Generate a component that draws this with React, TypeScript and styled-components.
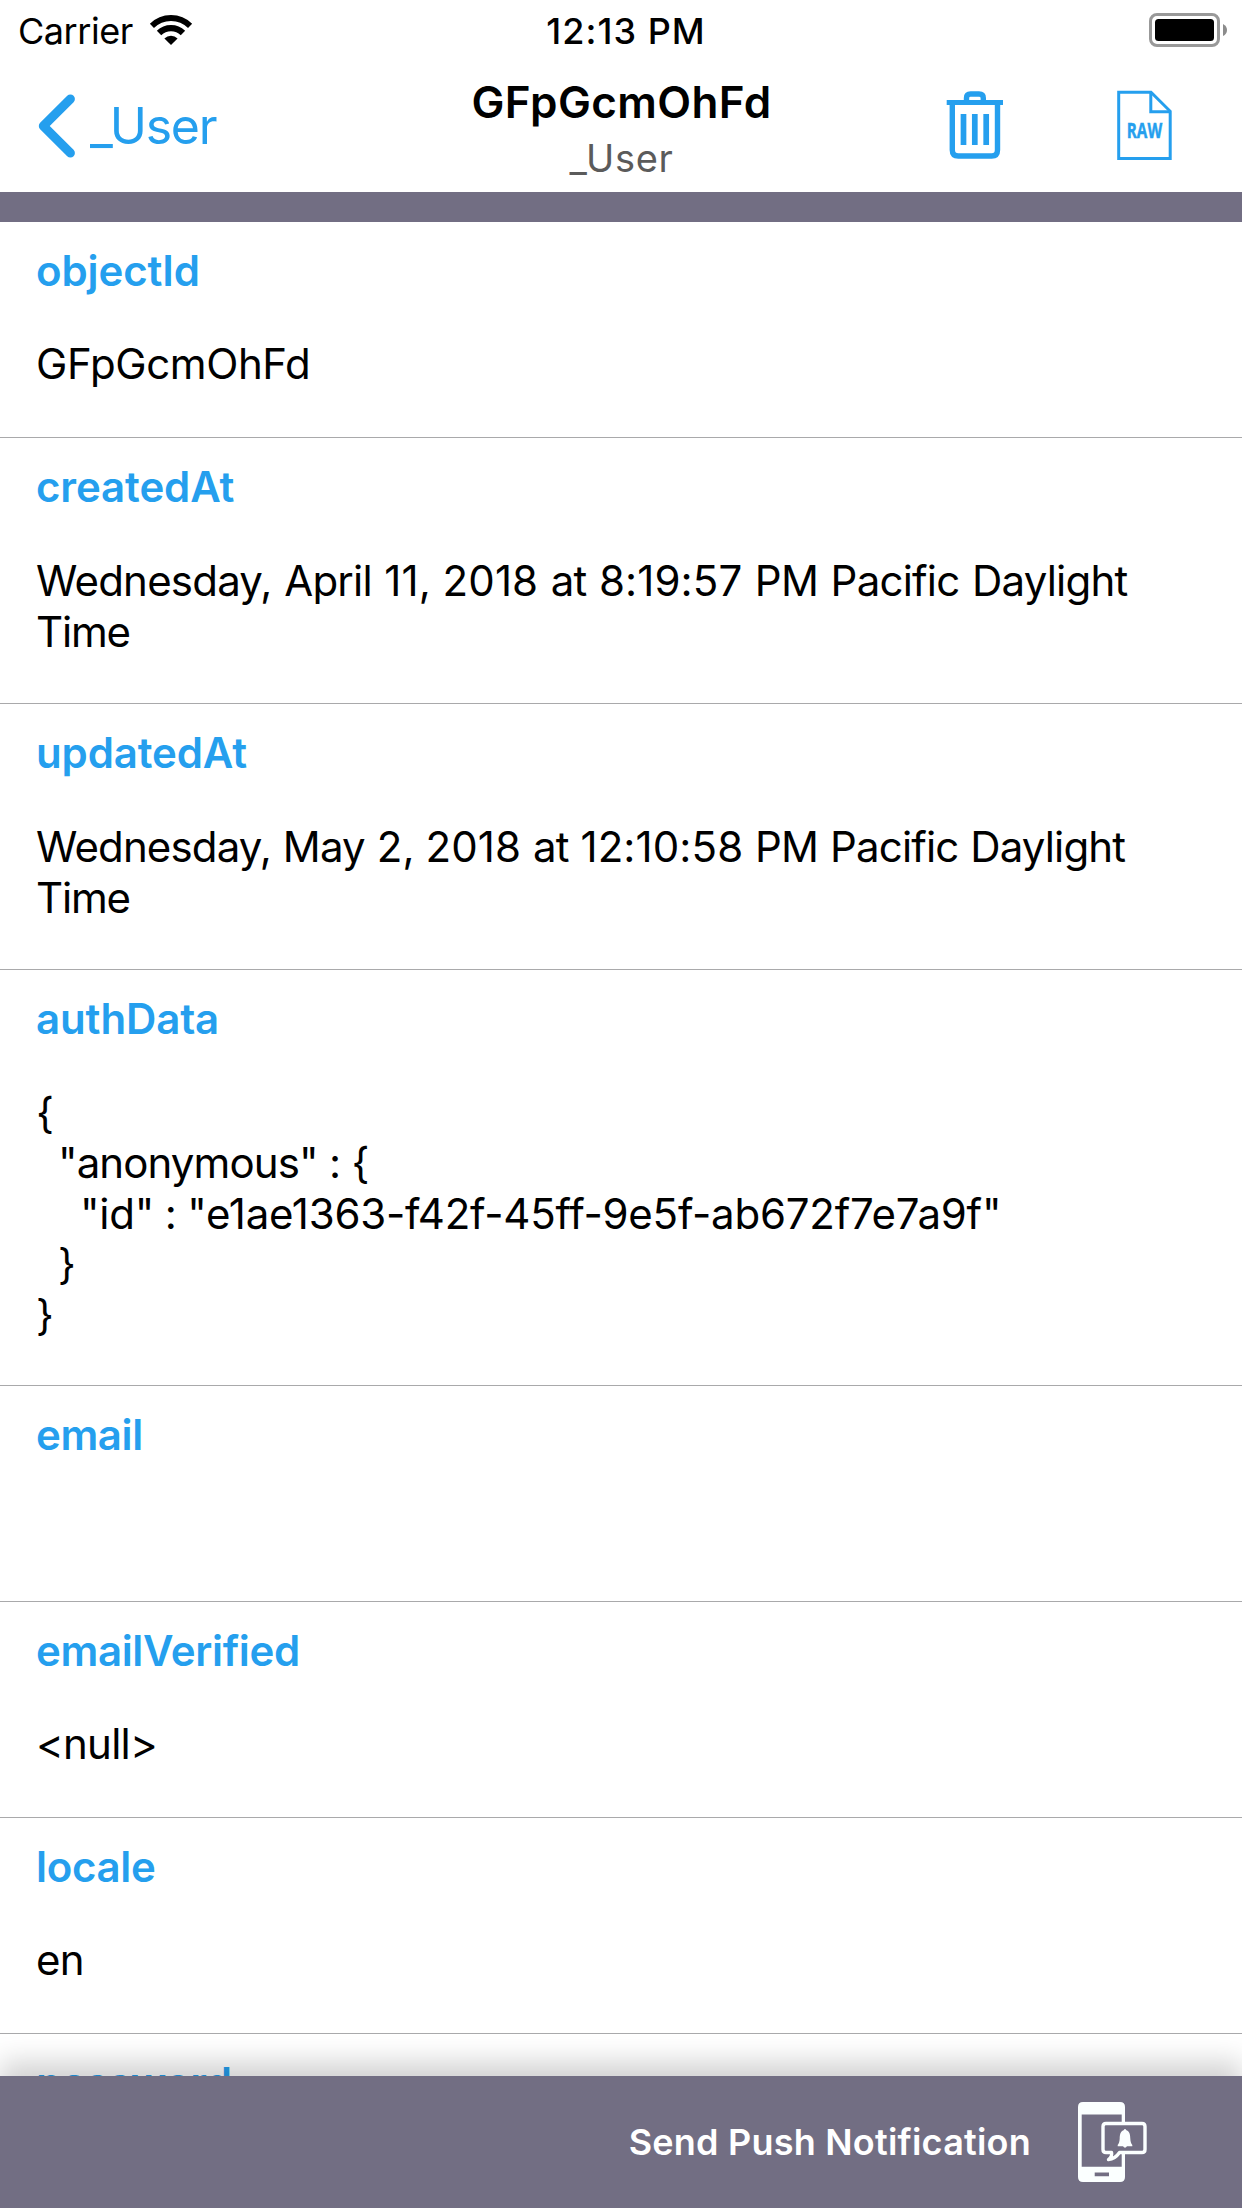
import React from 'react';
import styled, { createGlobalStyle } from 'styled-components';

const BLUE = '#259fee';
const SLATE = '#726e83';

const GlobalStyle = createGlobalStyle`
  *, *::before, *::after { box-sizing: border-box; }
  html, body { margin: 0; padding: 0; background: #fff; }
  body { font-family: Inter, Roboto, sans-serif; color: #000; }
`;

const Screen = styled.div`
  display: flex;
  flex-direction: column;
  width: 1242px;
  height: 2208px;
  overflow: hidden;
  background: #fff;
`;

const StatusBar = styled.div`
  display: grid;
  grid-template-columns: 1fr auto 1fr;
  align-items: center;
  flex: none;
  height: 60px;
  padding: 0 15px 0 18px;
  font-size: 36px;
  line-height: 56px;
`;

const Carrier = styled.div`
  display: flex;
  align-items: center;
  gap: 16px;
  letter-spacing: -0.45px;

  svg {
    margin-bottom: 2px;
  }
`;

const StatusText = styled.span`
  padding-top: 2px;
`;

const Clock = styled.div`
  padding: 2px 0 0 7px;
  font-weight: 500;
  letter-spacing: 1.05px;
`;

const BatterySlot = styled.div`
  display: flex;
  justify-content: flex-end;
`;

const NavBar = styled.header`
  display: grid;
  grid-template-columns: 1fr auto 1fr;
  flex: none;
  height: 132px;
`;

const BackButton = styled.button`
  display: flex;
  align-items: center;
  gap: 14px;
  height: 132px;
  padding: 0 0 0 36px;
  border: 0;
  background: none;
  color: ${BLUE};
  font: 400 50px/60px Inter, Roboto, sans-serif;
  letter-spacing: -1.2px;
`;

const TitleGroup = styled.div`
  display: flex;
  flex-direction: column;
  align-items: center;
  padding: 15px 0 0 1px;
`;

const Title = styled.h1`
  margin: 0;
  font-size: 44px;
  line-height: 54px;
  font-weight: 600;
  letter-spacing: 0.4px;
`;

const Subtitle = styled.div`
  margin-top: 6px;
  color: #5b5b5b;
  font-size: 38px;
  line-height: 46px;
  letter-spacing: 0.7px;
`;

const Actions = styled.div`
  display: flex;
  justify-content: flex-end;
  align-items: flex-start;
  gap: 112px;
  padding: 30px 70px 0 0;
`;

const IconButton = styled.button`
  display: flex;
  padding: 0;
  border: 0;
  background: none;
  color: ${BLUE};
`;

const Divider = styled.div`
  flex: none;
  height: 30px;
  background: ${SLATE};
`;

const FieldList = styled.main`
  flex: 1;
  min-height: 0;
  overflow: hidden;
`;

const Field = styled.section`
  padding: 24px 36px 48px;
  border-bottom: 1px solid #a9a9ab;
`;

const FieldName = styled.h2<{ $tracking?: number }>`
  margin: 0 0 43px;
  color: ${BLUE};
  font-size: 42px;
  line-height: 50px;
  font-weight: 600;
  letter-spacing: ${p => p.$tracking ?? -0.12}px;
`;

const valueSpacing = {
  text: 'line-height: 50px;',
  date: 'line-height: 51px; margin-bottom: -2px;',
  json: 'line-height: 50.4px; margin-top: 44px; margin-bottom: -3px;',
};

const FieldValue = styled.div<{ $kind: keyof typeof valueSpacing }>`
  min-height: 50px;
  font-size: 42px;
  ${p => valueSpacing[p.$kind]}
`;

const ValueLine = styled.div<{ $tracking?: number; $wordGap?: number; $indent?: number }>`
  white-space: pre-wrap;
  padding-left: ${p => p.$indent ?? 0}px;
  letter-spacing: ${p => p.$tracking ?? -0.75}px;
  word-spacing: ${p => p.$wordGap ?? 0}px;
`;

const Digits = styled.span`
  letter-spacing: 0.1px;
`;

const Footer = styled.footer`
  position: relative;
  display: flex;
  justify-content: flex-end;
  align-items: center;
  flex: none;
  gap: 47px;
  height: 132px;
  padding-right: 94px;
  background: ${SLATE};
  box-shadow: 0 -14px 26px rgba(0, 0, 0, 0.18);
  color: #fff;
`;

const PushLabel = styled.span`
  font-size: 36px;
  line-height: 44px;
  font-weight: 600;
  letter-spacing: 0.22px;
`;

const WifiIcon = () => (
  <svg width="44" height="32" viewBox="0 0 44 32" fill="none" stroke="#000">
    <path d="M2.91 12.91A27 27 0 0 1 41.09 12.91" strokeWidth="5.8" />
    <path d="M10.05 20.05A16.9 16.9 0 0 1 33.95 20.05" strokeWidth="6.2" />
    <path d="M22 32L15.4 25.4A9.3 9.3 0 0 1 28.6 25.4Z" fill="#000" stroke="none" />
  </svg>
);

const BatteryIcon = () => (
  <svg width="78" height="34" viewBox="0 0 78 34">
    <rect x="1.5" y="1.5" width="68" height="31" rx="6.5" fill="none" stroke="#999" strokeWidth="3" />
    <rect x="6" y="6" width="59" height="22" rx="3.5" fill="#000" />
    <path d="M74 11Q78 13 78 17T74 23Z" fill="#8c8c8c" />
  </svg>
);

const ChevronIcon = () => (
  <svg width="40" height="64" viewBox="0 0 40 64" fill="none" stroke="currentColor" strokeWidth="9" strokeLinecap="round" strokeLinejoin="round">
    <path d="M34.4 5L7.3 32L34.4 59" />
  </svg>
);

const TrashIcon = () => (
  <svg width="58" height="70" viewBox="0 0 58 70" fill="none" stroke="currentColor">
    <path d="M0.7 12.5H57" strokeWidth="5.2" />
    <path d="M20.5 12V8Q20.5 4 24.5 4H33Q37.3 4 37.3 8V12" strokeWidth="5.4" />
    <path d="M6.3 12V60Q6.3 66 12.3 66H45.7Q51.5 66 51.5 60V12" strokeWidth="5.4" />
    <path d="M17.5 24V55M28.8 24V55M40.2 24V55" strokeWidth="5.7" />
  </svg>
);

const RawIcon = () => (
  <svg width="56" height="72" viewBox="0 0 56 72" fill="none" stroke="currentColor" strokeWidth="3">
    <path d="M2.7 2.2H35L54.2 21.3V68.5H2.7Z" />
    <path d="M34.8 2.5V21.7H54" />
    <text transform="translate(10.8 48.4) scale(0.71 1)" fontFamily="'Open Sans', sans-serif" fontWeight="700" fontSize="21.5" fill="currentColor" stroke="currentColor" strokeWidth="0.5">RAW</text>
  </svg>
);

const PushIcon = () => (
  <svg width="70" height="80" viewBox="0 0 70 80">
    <path fill="#fbffff" fillRule="evenodd" d="M5 0H42Q47 0 47 5V75Q47 80 42 80H5Q0 80 0 75V5Q0 0 5 0ZM3.7 12.6V64.7H43.7V12.6ZM16.7 70.5V74.2H31V70.5Z" />
    <path fill={SLATE} stroke="#fbffff" strokeWidth="3.4" strokeLinejoin="round" d="M28 21.5H64Q67 21.5 67 24.5V47.5Q67 50.5 64 50.5H41.5Q37 57 30.5 57.5Q34.5 54.5 33.5 50.5H28Q25 50.5 25 47.5V24.5Q25 21.5 28 21.5Z" />
    <path fill="#fbffff" d="M45.6 28.2Q47 25.8 48.4 28.2C51.8 29.5 52.2 33 52.3 36.5C52.4 39.5 53 41.5 54.3 42.9V44.3H49Q47 47 45 44.3H39.7V42.9C41 41.5 41.6 39.5 41.7 36.5C41.8 33 42.2 29.5 45.6 28.2Z" />
  </svg>
);

type Line = { text: string; tracking?: number; wordGap?: number; indent?: number };
type FieldData = { name: string; tracking?: number; lines: Line[]; kind?: 'date' | 'json' };

const fields: FieldData[] = [
  { name: 'objectId', lines: [{ text: 'GFpGcmOhFd', tracking: -0.42 }] },
  {
    name: 'createdAt',
    kind: 'date',
    lines: [
      { text: 'Wednesday, April 11, 2018 at 8:19:57 PM Pacific Daylight', tracking: -0.78, wordGap: 1.5 },
      { text: 'Time', tracking: -1.2 },
    ],
  },
  {
    name: 'updatedAt',
    kind: 'date',
    lines: [
      { text: 'Wednesday, May 2, 2018 at 12:10:58 PM Pacific Daylight', tracking: -0.85, wordGap: 0.9 },
      { text: 'Time', tracking: -1.2 },
    ],
  },
  {
    name: 'authData',
    kind: 'json',
    lines: [
      { text: '{' },
      { text: '"anonymous" : {', indent: 22, tracking: -0.9, wordGap: 0.4 },
      { text: '"id" : "e1ae1363-f42f-45ff-9e5f-ab672f7e7a9f"', indent: 44, tracking: -0.22, wordGap: -1 },
      { text: '}', indent: 22 },
      { text: '}' },
    ],
  },
  { name: 'email', lines: [], tracking: -0.4 },
  { name: 'emailVerified', lines: [{ text: '<null>' }], tracking: -0.35 },
  { name: 'locale', lines: [{ text: 'en' }], tracking: -0.3 },
  { name: 'password', lines: [], tracking: -0.45 },
];

const DateText = ({ text }: { text: string }) => (
  <>
    {text.split(/(\d[\d:]*)/).map((part, i) => (i % 2 ? <Digits key={i}>{part}</Digits> : part))}
  </>
);

export default function App() {
  return (
    <>
      <GlobalStyle />
      <Screen>
        <StatusBar>
          <Carrier><StatusText>Carrier</StatusText><WifiIcon /></Carrier>
          <Clock>12:13 PM</Clock>
          <BatterySlot><BatteryIcon /></BatterySlot>
        </StatusBar>
        <NavBar>
          <BackButton><ChevronIcon /><span>_User</span></BackButton>
          <TitleGroup>
            <Title>GFpGcmOhFd</Title>
            <Subtitle>_User</Subtitle>
          </TitleGroup>
          <Actions>
            <IconButton aria-label="Delete"><TrashIcon /></IconButton>
            <IconButton aria-label="Raw"><RawIcon /></IconButton>
          </Actions>
        </NavBar>
        <Divider />
        <FieldList>
          {fields.map(field => (
            <Field key={field.name}>
              <FieldName $tracking={field.tracking}>{field.name}</FieldName>
              <FieldValue $kind={field.kind ?? 'text'}>
                {field.lines.map((line, i) => (
                  <ValueLine key={i} $tracking={line.tracking} $wordGap={line.wordGap} $indent={line.indent}>
                    {field.kind === 'date' ? <DateText text={line.text} /> : line.text}
                  </ValueLine>
                ))}
              </FieldValue>
            </Field>
          ))}
        </FieldList>
        <Footer>
          <PushLabel>Send Push Notification</PushLabel>
          <PushIcon />
        </Footer>
      </Screen>
    </>
  );
}
